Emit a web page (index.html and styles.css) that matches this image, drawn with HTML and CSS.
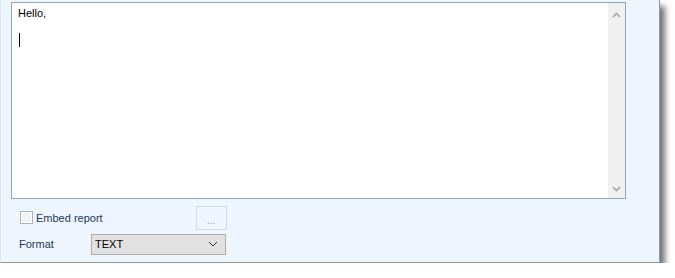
FILE: index.html
```html
<!DOCTYPE html>
<html>
<head>
<meta charset="utf-8">
<link rel="stylesheet" href="styles.css">
</head>
<body>
<div class="panel">
  <div class="editor">
    <div class="editor-text">
      <div class="line">Hello,</div>
      <div class="line blank"><span class="caret"></span></div>
    </div>
    <div class="scrollbar">
      <svg class="chev" width="9" height="6" viewBox="0 0 9 6"><path d="M1 5 L4.5 1.5 L8 5" fill="none" stroke="#a6a6a6" stroke-width="1.6"/></svg>
      <svg class="chev" width="9" height="6" viewBox="0 0 9 6"><path d="M1 1 L4.5 4.5 L8 1" fill="none" stroke="#a6a6a6" stroke-width="1.6"/></svg>
    </div>
  </div>
  <div class="row row-embed">
    <label class="check"><span class="box"></span><span class="label">Embed report</span></label>
    <button class="dots">...</button>
  </div>
  <div class="row row-format">
    <span class="label fmt">Format</span>
    <div class="select"><span>TEXT</span>
      <svg width="10" height="6" viewBox="0 0 10 6"><path d="M1 1 L5 5 L9 1" fill="none" stroke="#333" stroke-width="1"/></svg>
    </div>
  </div>
</div>
</body>
</html>
```
FILE: styles.css
```css
html, body { margin: 0; padding: 0; background: #ffffff; }
body { font-family: "Liberation Sans", Arial, sans-serif; }
.panel {
  width: 658px;
  height: 260px;
  background: #eef5fd;
  border-left: 1px solid #dce7f3;
  border-right: 1px solid #8e98a4;
  border-bottom: 1px solid #8e98a4;
  box-shadow: 5px 6px 6px rgba(0,0,0,0.55);
  padding-top: 2px;
  box-sizing: content-box;
}
.editor {
  margin-left: 10px;
  width: 613px;
  height: 195px;
  border: 1px solid #8fa6c3;
  background: #ffffff;
  display: flex;
}
.editor-text {
  flex: 1;
  padding: 4px 0 0 6px;
  font-size: 11px;
  color: #000;
}
.line { height: 13px; line-height: 13px; }
.blank { margin-top: 13px; height: 14px; }
.caret { display: inline-block; width: 1px; height: 14px; background: #000; margin-left: 1px; }
.scrollbar {
  width: 17px;
  background: #f0f0f0;
  display: flex;
  flex-direction: column;
  justify-content: space-between;
  align-items: center;
  padding: 9px 0 6px;
}
.chev { display: block; }
.row { display: flex; align-items: center; margin-left: 18px; }
.row-embed { margin-top: 7px; height: 23px; }
.check { display: flex; align-items: center; }
.box {
  width: 11px; height: 11px;
  border: 1px solid #a9b2bd;
  background: #f2f2f2;
  box-shadow: inset 0 0 0 1px #ffffff;
  margin-left: 1px;
  margin-right: 3px;
}
.label {
  font-size: 11px;
  color: #1e395b;
}
.dots {
  margin-left: 93px;
  width: 31px; height: 24px;
  border: 1px solid #cbdaed;
  background: #eef5fd;
  color: #9a9ab8;
  font-size: 10px;
  font-family: "Liberation Sans", Arial, sans-serif;
  padding: 6px 0 0;
  line-height: 12px;
}
.row-format { margin-top: 4px; height: 22px; }
.fmt { width: 72px; }
.select {
  width: 123px; height: 19px;
  border: 1px solid #adadad;
  background: #e1e1e1;
  display: flex; align-items: center; justify-content: space-between;
  padding: 0 7px 0 3px;
  box-sizing: content-box;
  font-size: 11px;
  color: #000;
}
```
